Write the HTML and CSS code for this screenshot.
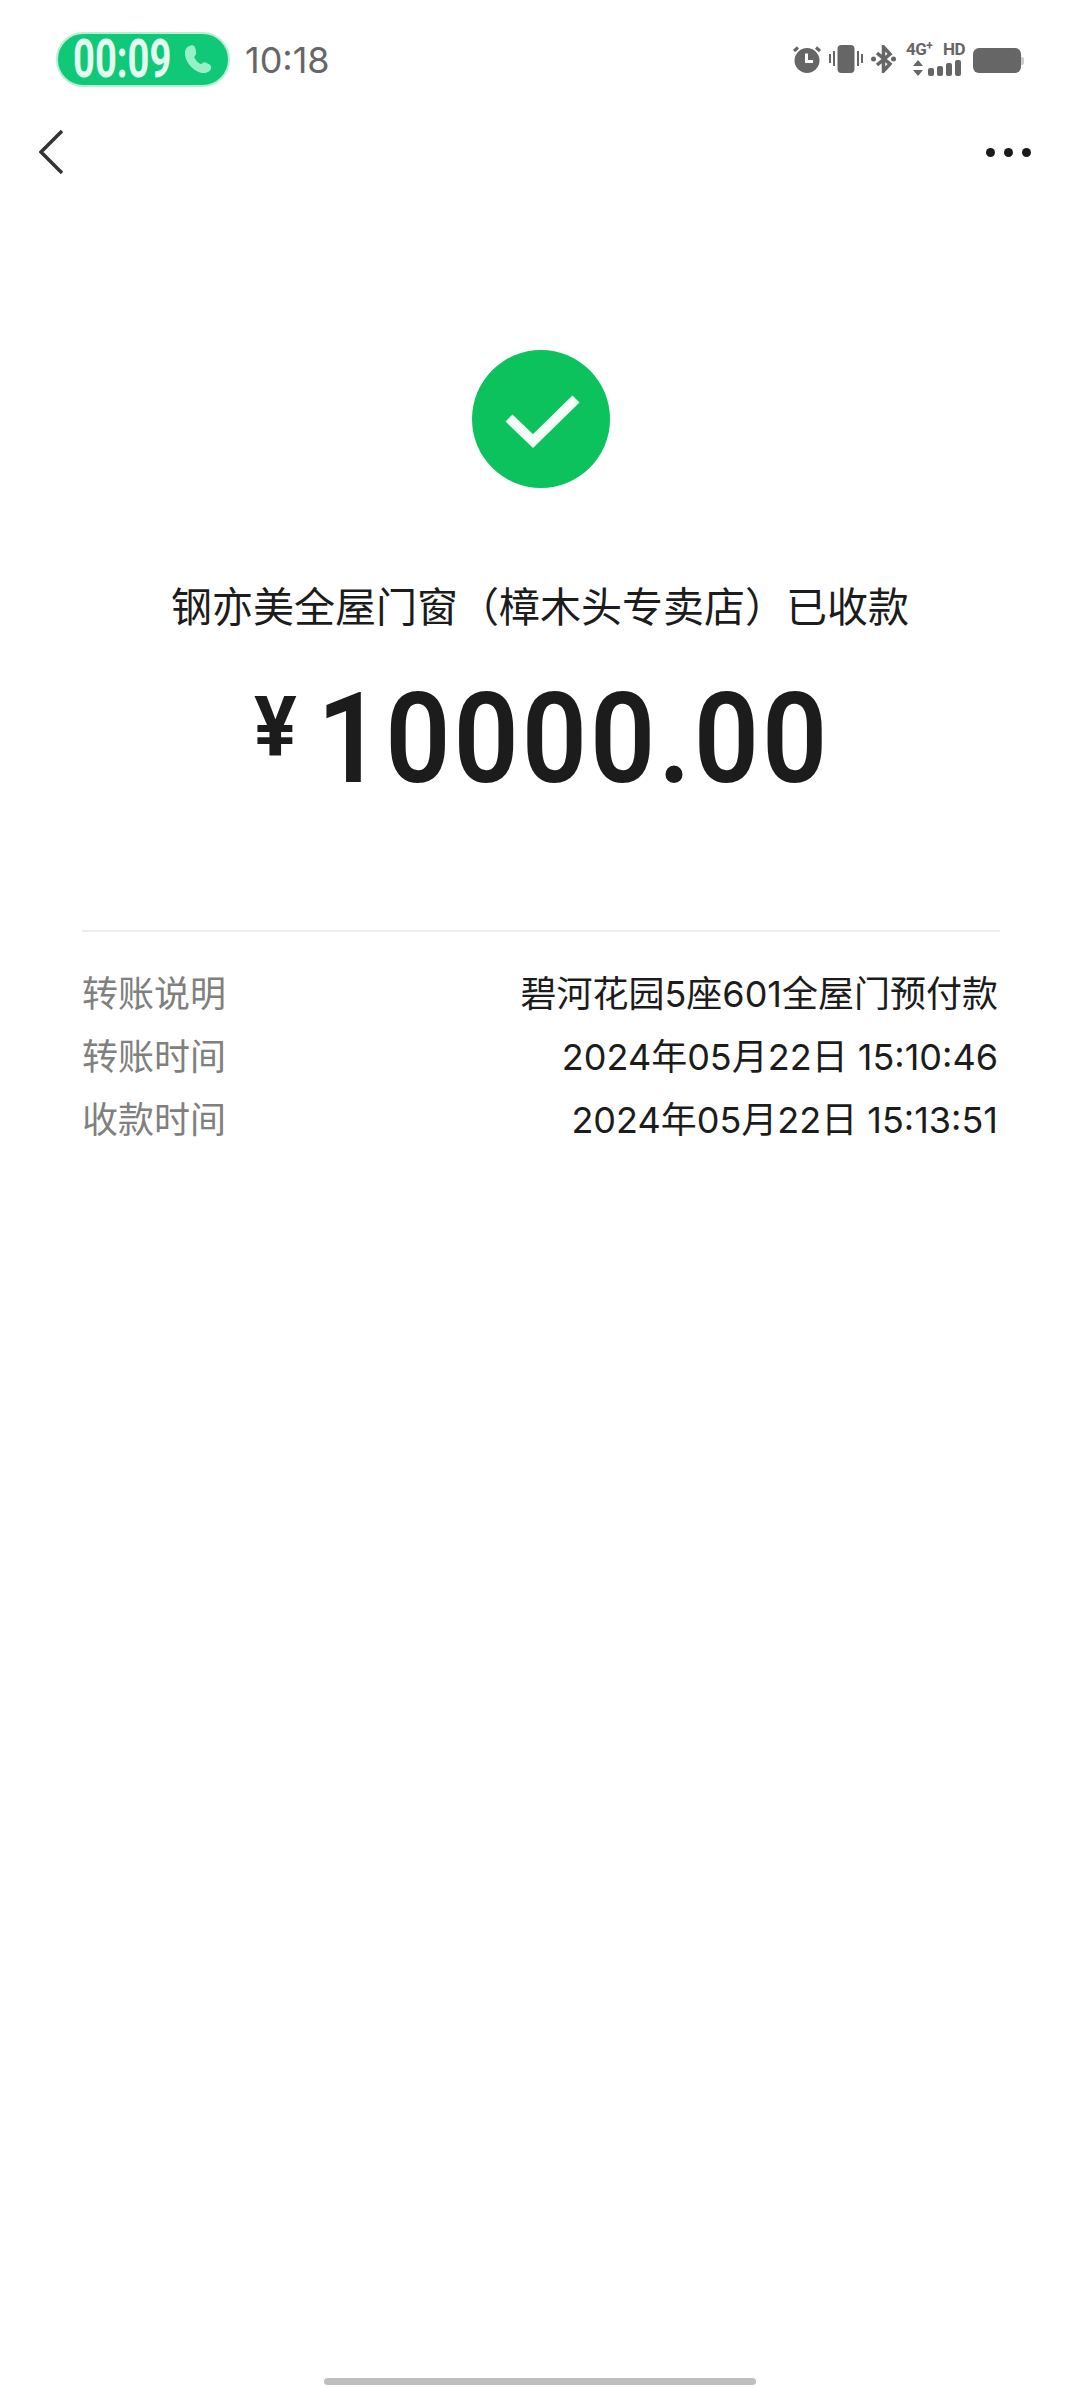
FILE: index.html
```html
<!DOCTYPE html>
<html lang="zh-CN">
<head>
<meta charset="utf-8">
<title>已收款</title>
<link rel="stylesheet" href="styles.css">
</head>
<body>
<div class="page">
  <header class="status">
    <div class="status-left">
      <div class="pill">
        <span class="pill-time">00:09</span>
        <svg class="pill-phone" viewBox="0 0 30 32"><path d="M7 1C10 0 12 2 12.500 5L13 9C13 11 11.500 12 11 13.500 12.500 17 15 19.500 18 21 19.500 20.500 20.500 18.500 22.500 19L27 21C29.500 22.500 29.800 25.500 28 27.500 25 31 19 32 13 28 6 24 1 16 1 9 1 5 3.500 2 7 1z"/></svg>
      </div>
      <span class="clock">10:18</span>
    </div>
    <div class="status-right">
      <svg class="ic-alarm" viewBox="0 0 28 28"><circle cx="14" cy="15.500" r="12.500"/><path class="cut" d="M13.500 8.500v8h6.500"/><path class="ear" d="M1 6 5 2.500M27 6 23 2.500"/></svg>
      <svg class="ic-vibrate" viewBox="0 0 34 28"><rect x="8.500" y="0" width="17" height="28" rx="4"/><rect x="0" y="9" width="2" height="9"/><rect x="4" y="6" width="2" height="15"/><rect x="28" y="6" width="2" height="15"/><rect x="32" y="9" width="2" height="9"/></svg>
      <svg class="ic-bt" viewBox="0 0 25 28"><path class="bt" d="M6 8 19 19 12.500 26V2L19 9 6 20"/><circle cx="2.500" cy="14" r="2.500"/><circle cx="22.500" cy="14" r="2.500"/></svg>
      <div class="net">
        <div class="net-top"><span class="net-4g">4G<sup class="net-plus">+</sup></span><span class="net-hd">HD</span></div>
        <div class="net-bottom">
          <svg class="ic-arrows" viewBox="0 0 10 16"><path d="M5 0l5 6H0zM5 16 0 10h10z"/></svg>
          <i class="bar b1"></i><i class="bar b2"></i><i class="bar b3"></i><i class="bar b4"></i>
        </div>
      </div>
      <div class="battery"><i class="battery-body"></i><i class="battery-cap"></i></div>
    </div>
  </header>

  <nav class="nav">
    <svg class="back" viewBox="0 0 24 44"><path d="M23 1 2 22 23 43"/></svg>
    <div class="more"><i></i><i></i><i></i></div>
  </nav>

  <main class="main">
    <svg class="check" viewBox="0 0 138 138"><circle cx="69" cy="69" r="69"/><path d="M37 68 61 91 104 49" /></svg>
    <h1 class="title">钢亦美全屋门窗（樟木头专卖店）已收款</h1>
    <div class="amount"><span class="yen">¥</span><span class="num">10000.00</span></div>
    <dl class="details">
      <div class="row"><dt>转账说明</dt><dd>碧河花园5座601全屋门预付款</dd></div>
      <div class="row"><dt>转账时间</dt><dd>2024年05月22日 15:10:46</dd></div>
      <div class="row"><dt>收款时间</dt><dd>2024年05月22日 15:13:51</dd></div>
    </dl>
  </main>

  <footer class="home"><i class="home-bar"></i></footer>
</div>
</body>
</html>
```
FILE: styles.css
```css
* { box-sizing: border-box; }
html, body { margin: 0; padding: 0; background: #fff; }
body { font-family: Roboto, "Noto Sans CJK SC", sans-serif; color: #1c1c1c; }
.page { width: 1080px; height: 2388px; display: flex; flex-direction: column; overflow: hidden; }

.status { height: 115px; padding: 32px 56px 0 56px; display: flex; justify-content: space-between; align-items: flex-start; }
.status-left { display: flex; align-items: center; gap: 15px; }
.pill { width: 174px; height: 55px; border-radius: 28px; background: #0fc878; border: 2px solid #b6efd2; display: flex; align-items: center; padding-left: 15px; gap: 13px; }
.pill-time { display: inline-block; width: 98px; font: 700 53px/1 Roboto, sans-serif; color: #e4fbf0; transform: scaleX(.72); transform-origin: left center; white-space: nowrap; }
.pill-phone { width: 28px; height: 31px; fill: #98f0c8; flex: none; }
.clock { font: 400 36px/1 Inter, sans-serif; color: #666; }

.status-right { display: flex; align-items: flex-start; gap: 8px; height: 55px; }
.status-right svg { fill: #666; flex: none; }
.ic-alarm { width: 28px; height: 28px; margin-top: 13px; }
.ic-alarm .cut { fill: none; stroke: #fff; stroke-width: 3; }
.ic-alarm .ear { fill: none; stroke: #666; stroke-width: 3; }
.ic-vibrate { width: 34px; height: 28px; margin-top: 13px; }
.ic-bt { width: 25px; height: 28px; margin-top: 13px; }
.ic-bt .bt { fill: none; stroke: #666; stroke-width: 3.500; }
.net { width: 59px; margin: 9px 0 0 2px; display: flex; flex-direction: column; gap: 2px; }
.net-top { display: flex; justify-content: space-between; font: 700 17px/17px Roboto, sans-serif; color: #666; height: 17px; letter-spacing: -.5px; }
.net-4g { white-space: nowrap; }
.net-plus { font-size: 12px; line-height: 0; vertical-align: 5px; }
.net-bottom { display: flex; align-items: flex-end; gap: 3px; height: 16px; padding-left: 7px; }
.ic-arrows { width: 10px; height: 16px; margin-right: 2px; }
.bar { width: 6px; background: #666; border-radius: 2px; display: block; }
.b1 { height: 8px; } .b2 { height: 10px; } .b3 { height: 13px; } .b4 { height: 16px; }
.battery { display: flex; align-items: center; margin-top: 16px; }
.battery-body { display: block; width: 48px; height: 25px; background: #666; border-radius: 6px; }
.battery-cap { display: block; width: 3px; height: 8px; background: #ccc; border-radius: 0 2px 2px 0; }

.nav { height: 74px; padding: 0 49px 0 39px; display: flex; align-items: center; justify-content: space-between; }
.back { width: 24px; height: 44px; fill: none; stroke: #333; stroke-width: 3.500; }
.more { display: flex; gap: 9px; }
.more i { display: block; width: 9px; height: 9px; border-radius: 50%; background: #1a1a1a; }

.main { flex: 1; padding-top: 161px; display: flex; flex-direction: column; align-items: center; }
.check { width: 138px; height: 138px; flex: none; margin-left: 2px; }
.check circle { fill: #0bc25c; }
.check path { fill: none; stroke: #f4fff8; stroke-width: 10; }
.title { margin: 88px 0 0; font: 400 41px/56px "Noto Sans CJK SC", sans-serif; color: #1c1c1c; white-space: nowrap; }
.amount { margin-top: 43px; display: flex; align-items: flex-start; color: #1c1c1c; }
.yen { font: 700 84px/1 Roboto, "Noto Sans", sans-serif; margin: 11px 15px 0 0; width: 48px; transform: scaleX(.95); transform-origin: left center; }
.num { display: block; width: 510px; font: 600 127px/1 Roboto, sans-serif; letter-spacing: 3.300px; transform: scaleX(.9); transform-origin: left center; white-space: nowrap; }
.details { align-self: stretch; margin: 128px 80px 0 82px; padding: 28px 2px 0 0; border-top: 2px solid #eeeeee; }
.row { display: flex; justify-content: space-between; align-items: baseline; height: 63px; }
dt { font: 400 36px/63px "Noto Sans CJK SC", sans-serif; color: #808080; }
dd { margin: 0; font: 400 36px/63px Inter, "Noto Sans CJK SC", sans-serif; color: #1c1c1c; white-space: nowrap; }

.home { height: 7px; margin-bottom: 3px; display: flex; justify-content: center; }
.home-bar { display: block; width: 432px; height: 7px; border-radius: 4px; background: #bfbfbf; }
```
